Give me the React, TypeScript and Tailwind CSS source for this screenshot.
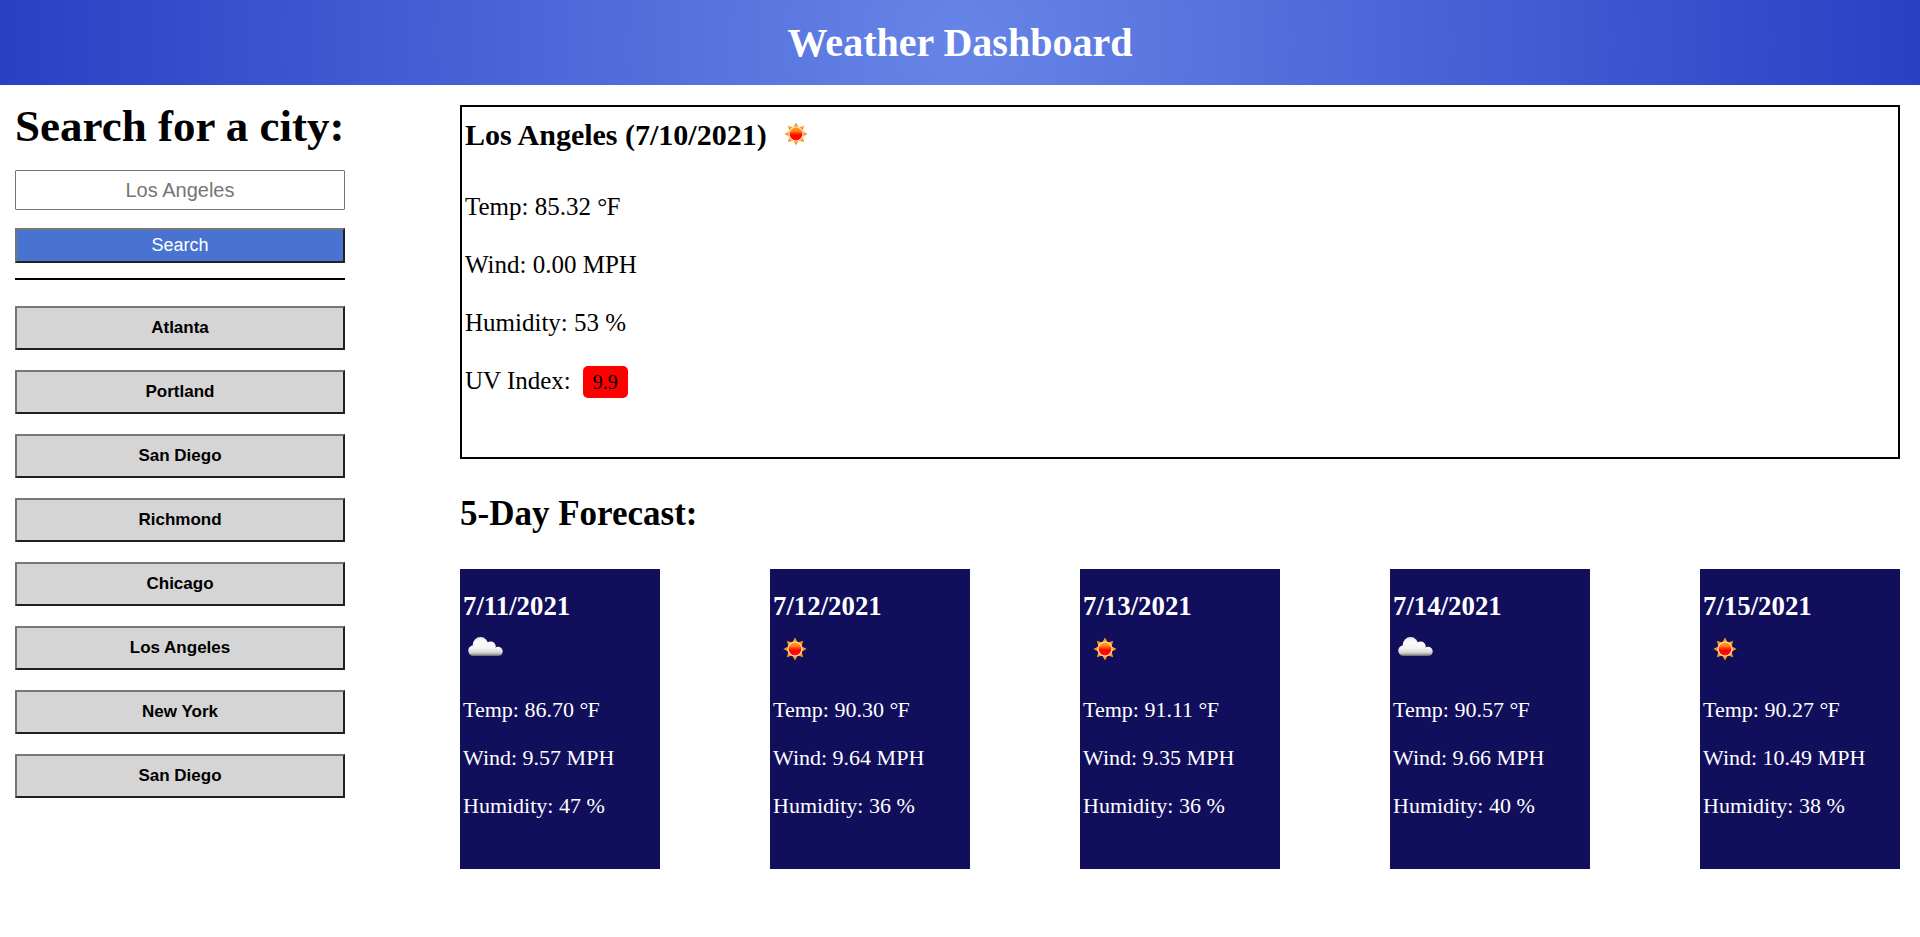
import React from "react";

type Sky = "sun" | "cloud";

const cities = ["Atlanta", "Portland", "San Diego", "Richmond", "Chicago", "Los Angeles", "New York", "San Diego"];

const days: { date: string; sky: Sky; temp: string; wind: string; humidity: number }[] = [
  { date: "7/11/2021", sky: "cloud", temp: "86.70", wind: "9.57", humidity: 47 },
  { date: "7/12/2021", sky: "sun", temp: "90.30", wind: "9.64", humidity: 36 },
  { date: "7/13/2021", sky: "sun", temp: "91.11", wind: "9.35", humidity: 36 },
  { date: "7/14/2021", sky: "cloud", temp: "90.57", wind: "9.66", humidity: 40 },
  { date: "7/15/2021", sky: "sun", temp: "90.27", wind: "10.49", humidity: 38 },
];

const rays = [0, 45, 90, 135, 180, 225, 270, 315];

function SkyIcon({ sky }: { sky: Sky }) {
  return (
    <svg width="50" height="50" viewBox="0 0 50 50" className="block shrink-0">
      <defs>
        <linearGradient id="sunFill" x1="0" y1="0" x2="0" y2="1">
          <stop offset="0" stopColor="#ff9a10" />
          <stop offset="0.25" stopColor="#ff8a1c" />
          <stop offset="0.45" stopColor="#ff3a00" />
          <stop offset="0.6" stopColor="#ff0000" />
          <stop offset="1" stopColor="#ff1000" />
        </linearGradient>
        <linearGradient id="cloudFill" x1="0" y1="13" x2="0" y2="32" gradientUnits="userSpaceOnUse">
          <stop offset="0" stopColor="#e6e6e6" />
          <stop offset="0.25" stopColor="#fbfbfb" />
          <stop offset="0.6" stopColor="#f4f4f4" />
          <stop offset="0.82" stopColor="#d4d4d4" />
          <stop offset="0.93" stopColor="#9a9a9a" />
          <stop offset="1" stopColor="#606060" />
        </linearGradient>
      </defs>
      {sky === "sun" ? (
        <g>
          {rays.map((angle) => (
            <path key={angle} d="M22 19 L25 13.4 L28 19 Z" fill="#fb9a14" transform={`rotate(${angle} 25 25)`} />
          ))}
          <circle cx="25" cy="25" r="7.6" fill="#ffe3d0" />
          <circle cx="25" cy="25" r="6.4" fill="url(#sunFill)" />
        </g>
      ) : (
        <g fill="url(#cloudFill)">
          <circle cx="20.5" cy="20.9" r="7.8" />
          <circle cx="30.7" cy="22.6" r="5.1" />
          <circle cx="38.1" cy="27.4" r="4.6" />
          <circle cx="13.7" cy="26.6" r="5.4" />
          <rect x="13.7" y="22" width="20" height="10" />
          <rect x="30" y="25" width="8.1" height="7" />
        </g>
      )}
    </svg>
  );
}

function Fahrenheit() {
  return (
    <span>
      <span className="tracking-[-0.03em]">°</span>F
    </span>
  );
}

export default function App() {
  return (
    <div className="min-h-[937px] bg-white font-['Liberation_Serif',serif] text-black">
      <header className="flex h-[85px] items-center justify-center bg-[radial-gradient(circle,#6785e7_0%,#2940c4_100%)]">
        <h1 className="text-[40px] leading-[45px] font-bold text-white">Weather Dashboard</h1>
      </header>

      <div className="flex items-start justify-between pr-5 pl-[15px]">
        <aside className="flex w-[330px] flex-col pt-4 font-['Liberation_Sans',sans-serif]">
          <h2 className="font-['Liberation_Serif',serif] text-[45px] leading-[50px] font-bold whitespace-nowrap">
            Search for a city:
          </h2>
          <input
            type="text"
            placeholder="Los Angeles"
            className="mt-[19px] h-10 w-full rounded-[1px] border border-[#767676] bg-white text-center text-[20px] placeholder:text-[#757575]"
          />
          <button className="mt-[18px] h-[35px] border-2 border-t-[#767676] border-r-[#212121] border-b-[#212121] border-l-[#767676] bg-[#4873d1] pb-px text-[18px] leading-5 text-white">
            Search
          </button>
          <div className="mt-[15px] h-0.5 bg-black" />
          <div className="mt-[26px] flex flex-col gap-5">
            {cities.map((city, i) => (
              <button
                key={i}
                className="h-11 border-2 border-t-[#767676] border-r-[#212121] border-b-[#212121] border-l-[#767676] bg-[#d5d5d5] text-[17px] leading-5 font-bold"
              >
                {city}
              </button>
            ))}
          </div>
        </aside>

        <main className="w-[1440px] pt-5">
          <section className="h-[354px] border-2 border-black px-[3px] pt-0.5">
            <div className="flex h-[50px] items-center gap-1">
              <h2 className="pt-0.5 text-[30px] leading-[34px] font-bold">Los Angeles (7/10/2021)</h2>
              <SkyIcon sky="sun" />
            </div>
            <div className="mt-[19px] text-[25px] leading-[58px]">
              <p>
                Temp: 85.32 <Fahrenheit />
              </p>
              <p>Wind: 0.00 MPH</p>
              <p>Humidity: 53 %</p>
              <div className="flex items-center gap-3">
                <span>UV Index:</span>
                <span className="mt-0.5 h-8 rounded-[5px] bg-[red] px-2.5 text-[20px] leading-[33px]">9.9</span>
              </div>
            </div>
          </section>

          <h2 className="mt-[35px] text-[35px] leading-10 font-bold">5-Day Forecast:</h2>

          <section className="mt-[35px] flex justify-between">
            {days.map((day) => (
              <article key={day.date} className="h-[300px] w-[200px] bg-[#110f5c] pt-[22px] text-white">
                <h3 className="pl-[3px] text-[26.8px] leading-[30px] font-bold">{day.date}</h3>
                <div className="mt-[3px]">
                  <SkyIcon sky={day.sky} />
                </div>
                <div className="mt-3 pl-[3px] text-[22px] leading-[48px]">
                  <p>
                    Temp: {day.temp} <Fahrenheit />
                  </p>
                  <p>Wind: {day.wind} MPH</p>
                  <p>Humidity: {day.humidity} %</p>
                </div>
              </article>
            ))}
          </section>
        </main>
      </div>
    </div>
  );
}
